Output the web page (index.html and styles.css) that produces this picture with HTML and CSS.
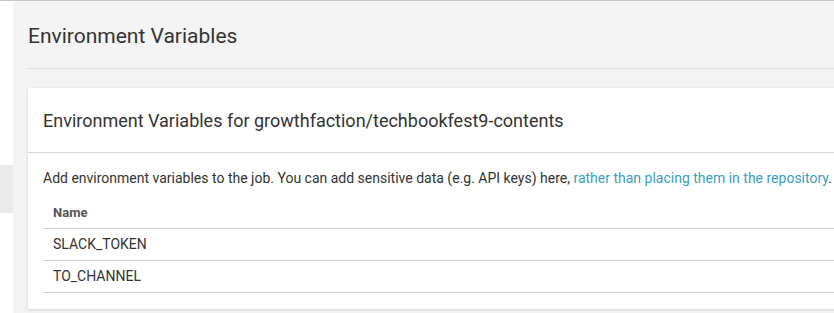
FILE: index.html
```html
<!DOCTYPE html>
<html lang="en">
<head>
    <meta charset="UTF-8">
    <title>Environment Variables</title>
    <link rel="stylesheet" href="styles.css">
</head>
<body>
    <div class="layout">
        <aside class="sidebar">
            <div class="side-item"></div>
        </aside>
        <main class="main">
            <div class="page-head">
                <h1>Environment Variables</h1>
            </div>
            <section class="card">
                <div class="card-head">
                    <h2>Environment Variables for growthfaction/techbookfest9-contents</h2>
                </div>
                <div class="card-body">
                    <p class="desc">Add environment variables to the job. You can add sensitive data (e.g. API keys) here, <a href="#">rather than placing them in the repository</a>.</p>
                    <table class="vars">
                        <thead>
                            <tr><th>Name</th></tr>
                        </thead>
                        <tbody>
                            <tr><td>SLACK_TOKEN</td></tr>
                            <tr><td>TO_CHANNEL</td></tr>
                        </tbody>
                    </table>
                </div>
            </section>
        </main>
    </div>
</body>
</html>
```

FILE: styles.css
```css
* {
    margin: 0;
    padding: 0;
    box-sizing: border-box;
}

body {
    font-family: Roboto, 'Liberation Sans', sans-serif;
    color: #333;
    background: #fff;
    border-top: 1px solid #c8c8c8;
    height: 100vh;
    overflow: hidden;
}

.layout {
    display: flex;
    height: 100%;
}

.sidebar {
    width: 13px;
    flex-shrink: 0;
    background: #fff;
    padding-top: 164px;
}

.side-item {
    height: 48px;
    background: #ebebeb;
}

.main {
    flex: 1;
    background: #f4f4f4;
    padding-left: 15px;
    min-width: 0;
}

.page-head {
    border-bottom: 1px solid #dedede;
    padding: 23px 0 20px;
}

h1 {
    font-size: 21px;
    font-weight: 400;
    line-height: 24px;
    color: #333;
}

.card {
    margin-top: 19px;
    background: #fff;
    box-shadow: 0 1px 3px rgba(0, 0, 0, 0.15);
    margin-right: -20px;
}

.card-head {
    padding: 22px 15px 21px;
    border-bottom: 1px solid #d6d6d6;
}

h2 {
    font-size: 18px;
    font-weight: 400;
    line-height: 21px;
    color: #333;
}

.card-body {
    padding: 16px 15px 16px;
}

.desc {
    font-size: 14px;
    line-height: 18px;
    color: #333;
}

.desc a {
    color: #3a9fbf;
    text-decoration: none;
}

.vars {
    width: 100%;
    border-collapse: collapse;
    margin-top: 10px;
    font-size: 14px;
}

.vars th {
    text-align: left;
    font-size: 13px;
    font-weight: 700;
    color: #555;
    padding: 8px 10px 8px;
    border-bottom: 1px solid #d0d0d0;
}

.vars td {
    padding: 7px 10px 8px;
    height: 32px;
    border-bottom: 1px solid #d0d0d0;
    color: #333;
}
```
